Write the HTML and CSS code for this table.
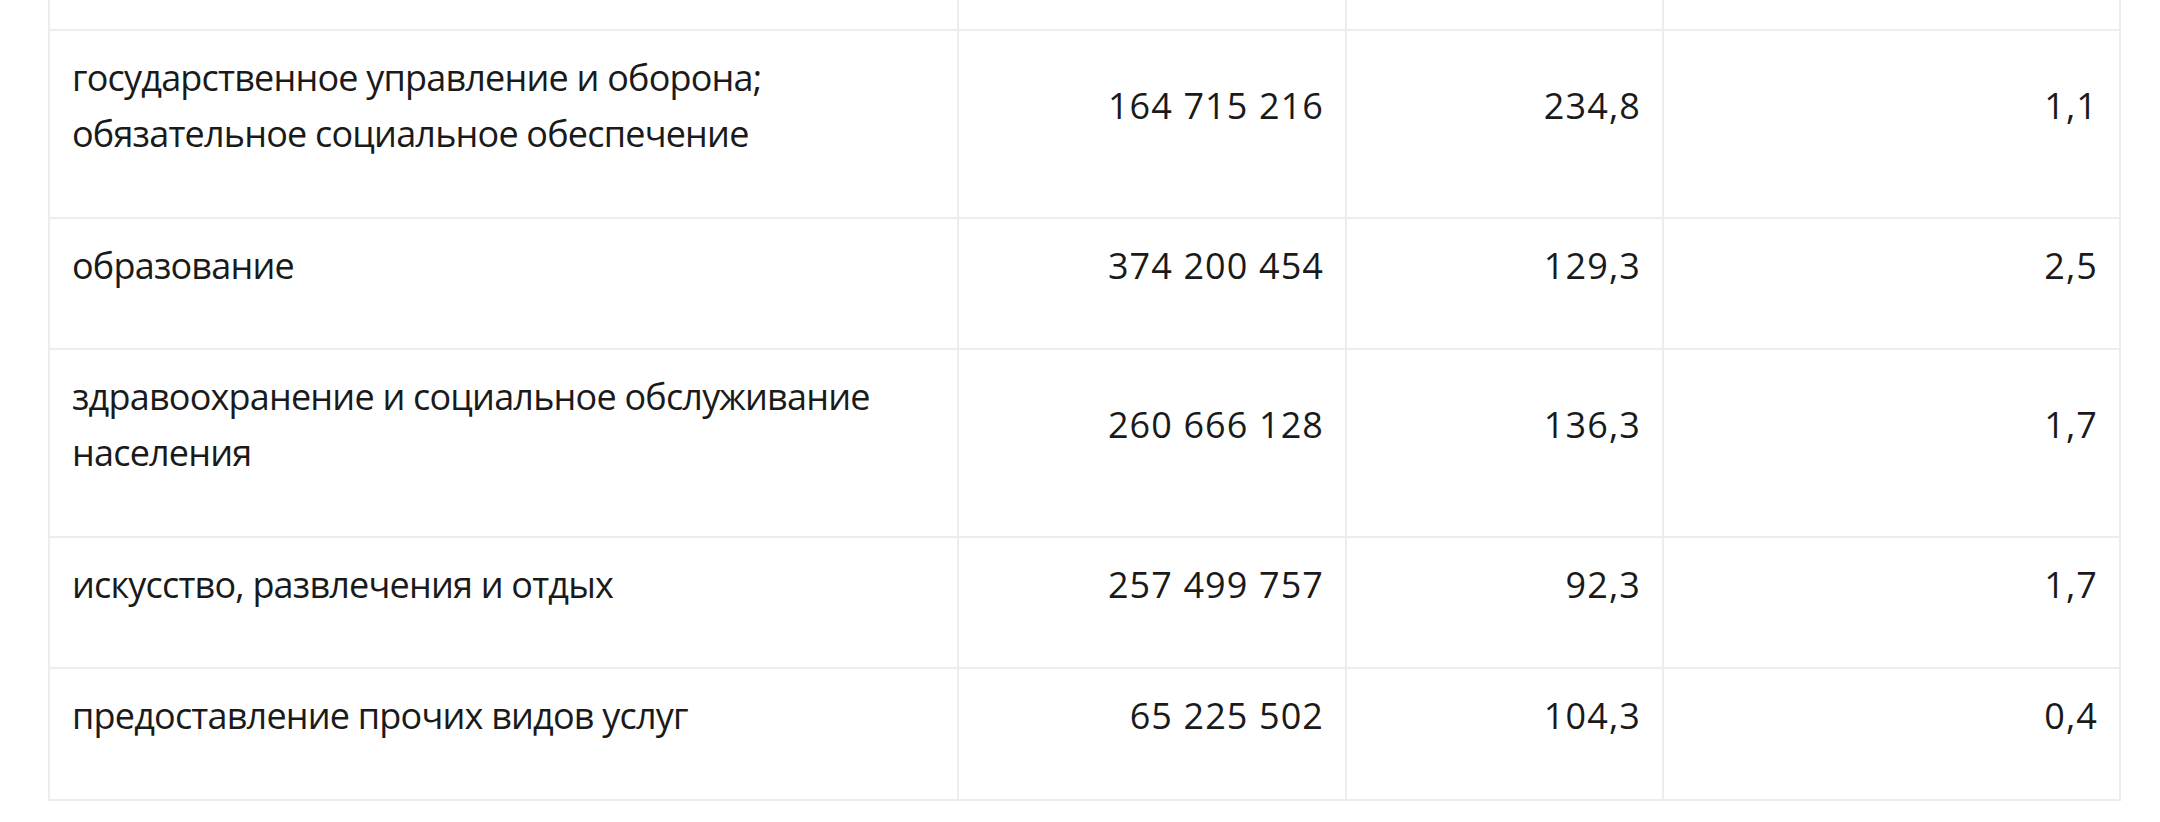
FILE: index.html
```html
<!DOCTYPE html>
<html lang="ru">
<head>
<meta charset="utf-8">
<title>Таблица</title>
<link rel="stylesheet" href="styles.css">
</head>
<body>
<table class="stats">
  <colgroup>
    <col class="c-name">
    <col class="c-val">
    <col class="c-idx">
    <col class="c-share">
  </colgroup>
  <tbody>
    <tr class="prev-row">
      <td></td><td></td><td></td><td></td>
    </tr>
    <tr>
      <td class="name">государственное управление и оборона; обязательное социальное обеспечение</td>
      <td class="num">164 715 216</td>
      <td class="num">234,8</td>
      <td class="num">1,1</td>
    </tr>
    <tr>
      <td class="name">образование</td>
      <td class="num">374 200 454</td>
      <td class="num">129,3</td>
      <td class="num">2,5</td>
    </tr>
    <tr>
      <td class="name">здравоохранение и социальное обслуживание населения</td>
      <td class="num">260 666 128</td>
      <td class="num">136,3</td>
      <td class="num">1,7</td>
    </tr>
    <tr>
      <td class="name">искусство, развлечения и отдых</td>
      <td class="num">257 499 757</td>
      <td class="num">92,3</td>
      <td class="num">1,7</td>
    </tr>
    <tr>
      <td class="name">предоставление прочих видов услуг</td>
      <td class="num">65 225 502</td>
      <td class="num">104,3</td>
      <td class="num">0,4</td>
    </tr>
  </tbody>
</table>
</body>
</html>
```
FILE: styles.css
```css
html, body {
  margin: 0;
  padding: 0;
  background: #ffffff;
}

body {
  font-family: "Open Sans", "Noto Sans", sans-serif;
  color: #1a1a1a;
}

.stats {
  margin-left: 48px;
  width: 2071px;
  border-collapse: collapse;
  table-layout: fixed;
  font-size: 36px;
  line-height: 56px;
}

.c-name { width: 909px; }
.c-val { width: 388px; }
.c-idx { width: 317px; }
.c-share { width: 457px; }

.stats td {
  border: 2px solid #ededed;
  padding: 19px 24px 54.5px 24px;
  vertical-align: middle;
}

.stats .prev-row td {
  border-top: none;
  height: 29px;
  padding: 0;
}

.stats td.name {
  letter-spacing: -0.8px;
  padding-left: 22px;
}

.stats td.num {
  text-align: right;
  letter-spacing: 1.1px;
  padding-right: 21px;
}
```
